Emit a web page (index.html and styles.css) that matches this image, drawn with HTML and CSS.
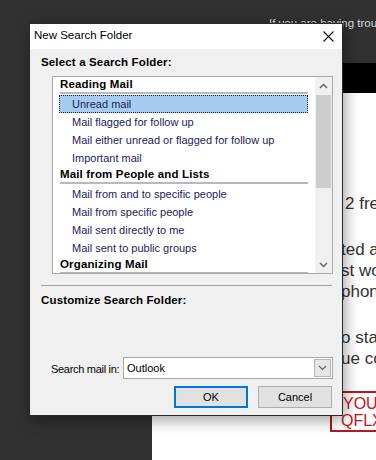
FILE: index.html
```html
<!DOCTYPE html>
<html>
<head>
<meta charset="utf-8">
<link rel="stylesheet" href="styles.css">
</head>
<body>
<div class="desktop">
  <div class="topnote">If you are having trouble viewing this email</div>
  <div class="page">
    <div class="page-bar"></div>
    <div class="page-body">
      <p class="para">2 free months</p>
      <p class="para">
        <span class="line cut">ted and</span>
        <span class="line cut">st work</span>
        <span class="line cut">phone</span>
      </p>
      <p class="para">
        <span class="line cut">o start</span>
        <span class="line cut">ue code</span>
      </p>
      <div class="promo">
        <span class="promo-line">YOUR</span>
        <span class="promo-line promo-code">QFLX</span>
      </div>
    </div>
  </div>
</div>

<div class="dialog">
  <div class="titlebar">
    <span class="title">New Search Folder</span>
    <svg class="close" width="11" height="11" viewBox="0 0 11 11"><path d="M0.5 0.5 L10.5 10.5 M10.5 0.5 L0.5 10.5" stroke="#111" stroke-width="1.1" fill="none"/></svg>
  </div>
  <div class="dlg-body">
    <div class="group-label">Select a Search Folder:</div>
    <div class="listbox">
      <div class="list-items">
        <div class="list-header">Reading Mail</div>
        <div class="list-item selected">Unread mail</div>
        <div class="list-item">Mail flagged for follow up</div>
        <div class="list-item">Mail either unread or flagged for follow up</div>
        <div class="list-item">Important mail</div>
        <div class="list-header">Mail from People and Lists</div>
        <div class="list-item">Mail from and to specific people</div>
        <div class="list-item">Mail from specific people</div>
        <div class="list-item">Mail sent directly to me</div>
        <div class="list-item">Mail sent to public groups</div>
        <div class="list-header">Organizing Mail</div>
        <div class="list-item">Categorized mail</div>
      </div>
      <div class="scrollbar">
        <div class="sb-btn">
          <svg width="9" height="6" viewBox="0 0 9 6"><path d="M1 5 L4.5 1.5 L8 5" stroke="#606060" stroke-width="1.4" fill="none"/></svg>
        </div>
        <div class="sb-track"><div class="sb-thumb"></div></div>
        <div class="sb-btn">
          <svg width="9" height="6" viewBox="0 0 9 6"><path d="M1 1 L4.5 4.5 L8 1" stroke="#606060" stroke-width="1.4" fill="none"/></svg>
        </div>
      </div>
    </div>
    <div class="separator"></div>
    <div class="group-label">Customize Search Folder:</div>
    <div class="field-row">
      <span class="field-label">Search mail in:</span>
      <div class="combo">
        <span class="combo-value">Outlook</span>
        <div class="combo-btn">
          <svg width="9" height="6" viewBox="0 0 9 6"><path d="M1 1 L4.5 4.5 L8 1" stroke="#606060" stroke-width="1.1" fill="none"/></svg>
        </div>
      </div>
    </div>
    <div class="buttons">
      <button class="btn btn-default">OK</button>
      <button class="btn">Cancel</button>
    </div>
  </div>
</div>
</body>
</html>
```

FILE: styles.css
```css
* { box-sizing: border-box; }

html, body {
  margin: 0;
  padding: 0;
  width: 376px;
  height: 460px;
  overflow: hidden;
  background: #313131;
  font-family: "Liberation Sans", Arial, sans-serif;
}

.desktop {
  position: relative;
  height: 460px;
}

.topnote {
  padding: 16px 0 0 269px;
  height: 33px;
  line-height: 14px;
  font-size: 11.5px;
  color: #d8d8d8;
  white-space: nowrap;
  overflow: hidden;
}

.page {
  margin-left: 152px;
  margin-top: 30px;
  height: 397px;
  background: #fff;
  overflow: hidden;
}

.page-bar {
  height: 30px;
  background: #000;
}

.page-body {
  padding: 100px 0 0 193px;
  font-size: 17px;
  line-height: 21px;
  color: #333;
  white-space: nowrap;
}

.para {
  margin: 0 0 25px 0;
}

.para + .para + .para { margin-bottom: 22px; }

.line {
  display: block;
}

.cut {
  margin-left: -4px;
}

.promo {
  margin-left: -15px;
  width: 220px;
  border: 2px solid #b3191f;
  padding: 2px 0 1px 11px;
  color: #c8141e;
  font-size: 16px;
  line-height: 17px;
}

.promo-line { display: block; }
.promo-code { margin-left: -2px; }

/* Dialog window */
.dialog {
  position: absolute;
  left: 29px;
  top: 23px;
  width: 314px;
  height: 393px;
  border: 1px solid #2a2a2a;
  background: #f0f0f0;
  box-shadow: 2px 4px 14px rgba(0, 0, 0, 0.38);
  display: flex;
  flex-direction: column;
}

.titlebar {
  flex-shrink: 0;
  height: 25px;
  background: #fff;
  display: flex;
  align-items: flex-start;
  justify-content: space-between;
}

.title {
  padding-left: 4px;
  font-size: 11.5px;
  line-height: 22px;
  color: #000;
}

.close {
  margin-top: 7px;
  margin-right: 8px;
}

.dlg-body {
  flex: 1;
  padding: 6px 10px 7px 11px;
  display: flex;
  flex-direction: column;
}

.dlg-body > * { flex-shrink: 0; }

.group-label {
  font-weight: bold;
  font-size: 11.5px;
  line-height: 14px;
  letter-spacing: 0.15px;
  color: #000;
  white-space: nowrap;
}

.listbox {
  margin: 7px 0 0 11px;
  width: 281px;
  height: 198px;
  border: 1px solid #a9a9a9;
  background: #fff;
  display: flex;
  overflow: hidden;
}

.list-items {
  flex: 1;
  padding: 0 7px 0 6px;
  overflow: hidden;
}

.list-header {
  margin-left: 1px;
  box-sizing: content-box;
  height: 14px;
  font-weight: bold;
  font-size: 11.5px;
  line-height: 14px;
  letter-spacing: 0.15px;
  color: #000;
  padding-bottom: 1px;
  border-bottom: 2px solid #b9b9b9;
  margin-bottom: 1px;
  white-space: nowrap;
}

.list-item {
  height: 18px;
  padding-left: 13px;
  font-size: 11px;
  line-height: 18px;
  color: #1c1c5c;
  white-space: nowrap;
}

.list-item.selected {
  background: #a6cdf1;
  outline: 1px dotted #202020;
  outline-offset: -1px;
}

.scrollbar {
  width: 17px;
  background: #f0f0f0;
  display: flex;
  flex-direction: column;
}

.sb-btn {
  height: 17px;
  display: flex;
  align-items: center;
  justify-content: center;
}

.sb-track {
  flex: 1;
  padding: 1px 1px 0 1px;
}

.sb-thumb {
  height: 93px;
  background: #cdcdcd;
}

.separator {
  margin-top: 11px;
  height: 1px;
  background: #a0a0a0;
  margin-bottom: 7px;
}

.field-row {
  margin-top: 50px;
  margin-right: -1px;
  padding-left: 10px;
  display: flex;
  align-items: center;
}

.field-label {
  font-size: 11px;
  letter-spacing: -0.3px;
  color: #000;
  padding-top: 2px;
  white-space: nowrap;
}

.combo {
  margin-left: auto;
  width: 210px;
  height: 22px;
  border: 1px solid #a8a8a8;
  background: #fff;
  display: flex;
  align-items: center;
}

.combo-value {
  flex: 1;
  padding-left: 3px;
  font-size: 11px;
  line-height: 20px;
  color: #000;
}

.combo-btn {
  width: 17px;
  height: 18px;
  margin-right: 1px;
  border: 1px solid #b4b4b4;
  background: #e6e6e6;
  display: flex;
  align-items: center;
  justify-content: center;
}

.buttons {
  margin-top: 7px;
  display: flex;
  justify-content: flex-end;
  gap: 10px;
}

.btn {
  width: 74px;
  height: 22px;
  padding: 0;
  border: 1px solid #adadad;
  background: #e1e1e1;
  font-family: "Liberation Sans", Arial, sans-serif;
  font-size: 11px;
  color: #000;
}

.btn-default {
  border: 2px solid #0078d7;
}
```
